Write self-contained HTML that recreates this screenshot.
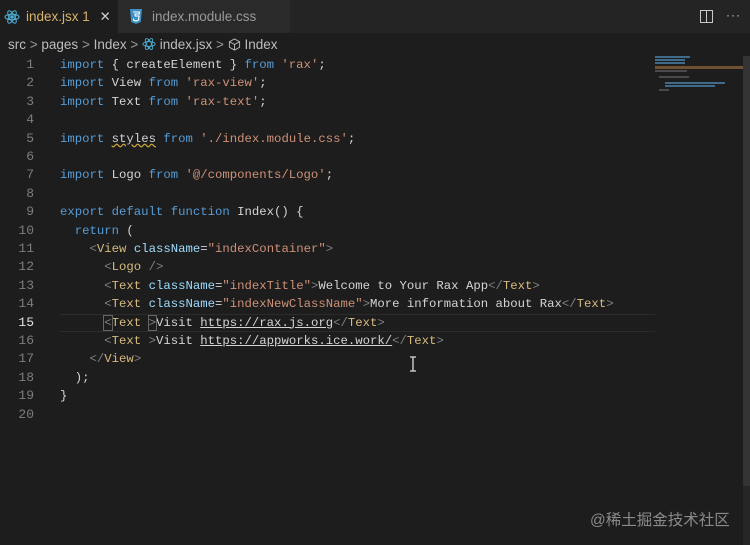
<!DOCTYPE html>
<html><head><meta charset="utf-8"><style>
*{margin:0;padding:0;box-sizing:border-box}
body{width:750px;height:545px;background:#1d1d1d;overflow:hidden;position:relative;font-family:"Liberation Sans",sans-serif}
.tabs{position:absolute;left:0;top:0;width:750px;height:33px;background:#242424}
.tab1{position:absolute;left:0;top:0;width:118px;height:33px;background:#1d1d1d;color:#d7b46a;font-size:13.5px;line-height:33px;padding-left:26px}
.tab2{position:absolute;left:118px;top:0;width:172px;height:33px;background:#2a2a2a;color:#9a9a9a;font-size:13.5px;line-height:33px;padding-left:34px}
.crumb{position:absolute;left:8px;top:36px;color:#bdbdbd;font-size:13.5px;line-height:18px;white-space:nowrap}
.code{position:absolute;left:0;top:56px;font-family:"Liberation Mono",monospace;font-size:12.3px;line-height:18.4px;white-space:pre;color:#d4d4d4}
.ln{position:absolute;left:0;width:34px;text-align:right;color:#7d7d7d;font-size:13px}
.l{position:absolute;left:60px}
.k{color:#569cd6}.s{color:#ce9178}.t{color:#d7ba7d}.a{color:#9cdcfe}.p{color:#808080}.u{text-decoration:underline}
.hl{position:absolute;left:60px;top:314px;width:595px;height:18px;border-top:1px solid #2c2c2c;border-bottom:1px solid #2c2c2c}
.wm{position:absolute;left:590px;top:508px;color:#8a8a8a;font-size:15.5px;font-family:"Liberation Sans","Noto Sans CJK SC",sans-serif}
</style></head><body>
<div class="tabs">
<div class="tab1"><svg style="position:absolute;left:4px;top:9px" width="16" height="16" viewBox="0 0 16 16" fill="none" stroke="#4fb3d9" stroke-width="1"><ellipse cx="8" cy="8" rx="7" ry="2.8"/><ellipse cx="8" cy="8" rx="7" ry="2.8" transform="rotate(60 8 8)"/><ellipse cx="8" cy="8" rx="7" ry="2.8" transform="rotate(120 8 8)"/><circle cx="8" cy="8" r="1.2" fill="#4fb3d9"/></svg>index.jsx 1 <span style="color:#ccc;margin-left:6px">✕</span></div>
<div class="tab2"><svg style="position:absolute;left:10px;top:8px" width="16" height="17" viewBox="0 0 16 17"><path d="M2 1h12l-1.2 13L8 16l-4.8-2z" fill="#3d8fc6"/><path d="M5 4h6.5l-.3 2H7l.2 2h3.8l-.4 4L8 13l-2.4-.8-.1-1.7" fill="none" stroke="#fff" stroke-width="1.1"/></svg>index.module.css</div>
<svg style="position:absolute;left:700px;top:10px" width="13" height="13" viewBox="0 0 13 13" fill="none" stroke="#c8c8c8"><rect x="0.5" y="0.5" width="12" height="12"/><line x1="6.5" y1="0.5" x2="6.5" y2="12.5"/></svg>
<div style="position:absolute;left:726px;top:8px;color:#c8c8c8;font-size:12px;letter-spacing:1px">···</div>
</div>
<div class="crumb">src <span style="color:#999">&gt;</span> pages <span style="color:#999">&gt;</span> Index <span style="color:#999">&gt;</span> <svg width="14" height="14" viewBox="0 0 16 16" fill="none" stroke="#4fb3d9" style="vertical-align:-2px"><ellipse cx="8" cy="8" rx="7" ry="2.8"/><ellipse cx="8" cy="8" rx="7" ry="2.8" transform="rotate(60 8 8)"/><ellipse cx="8" cy="8" rx="7" ry="2.8" transform="rotate(120 8 8)"/></svg> index.jsx <span style="color:#999">&gt;</span> <svg width="13" height="13" viewBox="0 0 14 14" fill="none" stroke="#bbb" style="vertical-align:-2px"><path d="M7 1l5.5 3v6L7 13 1.5 10V4z M1.5 4L7 7l5.5-3 M7 7v6"/></svg> Index</div>
<div class="hl"></div>
<div class="code">
<div class="ln" style="top:0">1</div><div class="l" style="top:0"><span class="k">import</span> { createElement } <span class="k">from</span> <span class="s">'rax'</span>;</div>
<div class="ln" style="top:18.4px">2</div><div class="l" style="top:18.4px"><span class="k">import</span> View <span class="k">from</span> <span class="s">'rax-view'</span>;</div>
<div class="ln" style="top:36.8px">3</div><div class="l" style="top:36.8px"><span class="k">import</span> Text <span class="k">from</span> <span class="s">'rax-text'</span>;</div>
<div class="ln" style="top:55.2px">4</div>
<div class="ln" style="top:73.6px">5</div><div class="l" style="top:73.6px"><span class="k">import</span> <span style="text-decoration:underline wavy #c9a23a">styles</span> <span class="k">from</span> <span class="s">'./index.module.css'</span>;</div>
<div class="ln" style="top:92px">6</div>
<div class="ln" style="top:110.4px">7</div><div class="l" style="top:110.4px"><span class="k">import</span> Logo <span class="k">from</span> <span class="s">'@/components/Logo'</span>;</div>
<div class="ln" style="top:128.8px">8</div>
<div class="ln" style="top:147.2px">9</div><div class="l" style="top:147.2px"><span class="k">export default function</span> Index() {</div>
<div class="ln" style="top:165.6px">10</div><div class="l" style="top:165.6px">  <span class="k">return</span> (</div>
<div class="ln" style="top:184px">11</div><div class="l" style="top:184px">    <span class="p">&lt;</span><span class="t">View</span> <span class="a">className</span>=<span class="s">"indexContainer"</span><span class="p">&gt;</span></div>
<div class="ln" style="top:202.4px">12</div><div class="l" style="top:202.4px">      <span class="p">&lt;</span><span class="t">Logo</span> <span class="p">/&gt;</span></div>
<div class="ln" style="top:220.8px">13</div><div class="l" style="top:220.8px">      <span class="p">&lt;</span><span class="t">Text</span> <span class="a">className</span>=<span class="s">"indexTitle"</span><span class="p">&gt;</span>Welcome to Your Rax App<span class="p">&lt;/</span><span class="t">Text</span><span class="p">&gt;</span></div>
<div class="ln" style="top:239.2px">14</div><div class="l" style="top:239.2px">      <span class="p">&lt;</span><span class="t">Text</span> <span class="a">className</span>=<span class="s">"indexNewClassName"</span><span class="p">&gt;</span>More information about Rax<span class="p">&lt;/</span><span class="t">Text</span><span class="p">&gt;</span></div>
<div class="ln" style="top:257.6px;color:#e0e0e0">15</div><div class="l" style="top:257.6px">      <span class="p" style="outline:1px solid #666">&lt;</span><span class="t">Text</span> <span class="p" style="outline:1px solid #666">&gt;</span>Visit <span class="u">https://rax.js.org</span><span class="p">&lt;/</span><span class="t">Text</span><span class="p">&gt;</span></div>
<div class="ln" style="top:276px">16</div><div class="l" style="top:276px">      <span class="p">&lt;</span><span class="t">Text</span> <span class="p">&gt;</span>Visit <span class="u">https://appworks.ice.work/</span><span class="p">&lt;/</span><span class="t">Text</span><span class="p">&gt;</span></div>
<div class="ln" style="top:294.4px">17</div><div class="l" style="top:294.4px">    <span class="p">&lt;/</span><span class="t">View</span><span class="p">&gt;</span></div>
<div class="ln" style="top:312.8px">18</div><div class="l" style="top:312.8px">  );</div>
<div class="ln" style="top:331.2px">19</div><div class="l" style="top:331.2px">}</div>
<div class="ln" style="top:349.6px">20</div>
</div>
<svg style="position:absolute;left:409px;top:356px" width="8" height="16" viewBox="0 0 8 16" fill="none" stroke="#ddd" stroke-width="1.3"><path d="M1 1h6M4 1v14M1 15h6"/></svg>
<div style="position:absolute;left:655px;top:56px;width:88px;height:40px">
<div style="position:absolute;left:0;top:0;width:35px;height:2px;background:#3f6a8a"></div>
<div style="position:absolute;left:0;top:3px;width:30px;height:2px;background:#3f6a8a"></div>
<div style="position:absolute;left:0;top:6px;width:30px;height:2px;background:#3f6a8a"></div>
<div style="position:absolute;left:0;top:10px;width:88px;height:3px;background:#6e5032"></div>
<div style="position:absolute;left:0;top:14px;width:32px;height:2px;background:#4a4a4a"></div>
<div style="position:absolute;left:4px;top:20px;width:30px;height:2px;background:#4a4a4a"></div>
<div style="position:absolute;left:10px;top:26px;width:60px;height:2px;background:#3f6a8a"></div>
<div style="position:absolute;left:10px;top:29px;width:50px;height:2px;background:#3f6a8a"></div>
<div style="position:absolute;left:4px;top:33px;width:10px;height:2px;background:#4a4a4a"></div>
</div>
<div style="position:absolute;left:743px;top:56px;width:7px;height:489px;background:#262626"></div>
<div style="position:absolute;left:743px;top:56px;width:7px;height:430px;background:#333"></div>
<div class="wm">@稀土掘金技术社区</div>
</body></html>
